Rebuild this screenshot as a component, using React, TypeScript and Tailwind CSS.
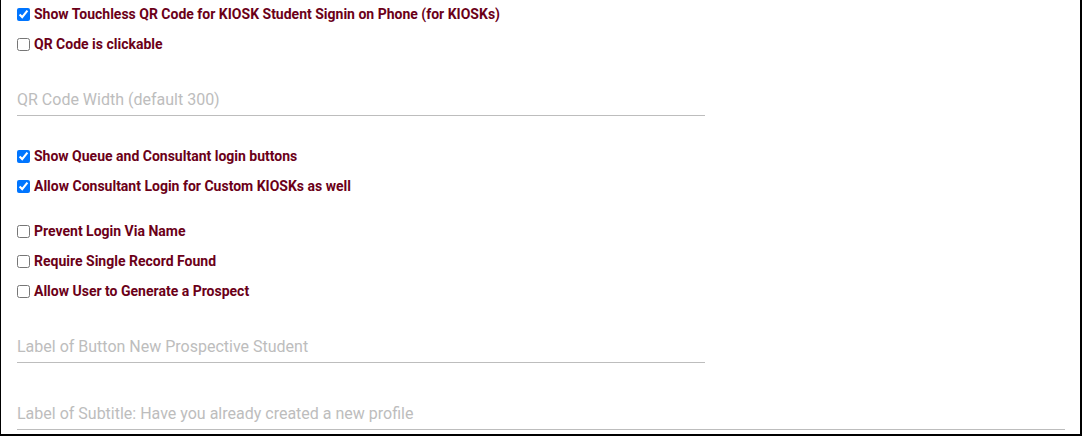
import React from "react";

const font = { fontFamily: "Roboto, 'Liberation Sans', sans-serif" };

function Check({ label, checked }: { label: string; checked?: boolean }) {
  return (
    <label className="flex h-[30px] items-center gap-[4px] text-[14px] font-bold text-[#6b0018]">
      <input type="checkbox" defaultChecked={checked} className="m-0 h-[13px] w-[13px]" />
      <span>{label}</span>
    </label>
  );
}

function Field({ placeholder, wide }: { placeholder: string; wide?: boolean }) {
  return (
    <input
      type="text"
      placeholder={placeholder}
      className={`h-[32px] ${wide ? "w-[1048px]" : "w-[688px]"} border-b border-[#bdbdbd] bg-transparent p-0 text-[16px] text-[#333] outline-none placeholder:text-[#bdbdbd]`}
      style={font}
    />
  );
}

export default function App() {
  return (
    <div
      className="box-border h-[436px] w-[1082px] overflow-hidden border-b-2 border-l border-r-2 border-black bg-white pl-[16px]"
      style={font}
    >
      <div className="flex flex-col">
        <div className="h-[29px]">
          <label className="flex h-[29px] items-center gap-[4px] text-[14px] font-bold text-[#6b0018]">
            <input type="checkbox" defaultChecked className="m-0 h-[13px] w-[13px]" />
            <span>Show Touchless QR Code for KIOSK Student Signin on Phone (for KIOSKs)</span>
          </label>
        </div>
        <Check label="QR Code is clickable" />
        <div className="mt-[25px]">
          <Field placeholder="QR Code Width (default 300)" />
        </div>
        <div className="mt-[25px]">
          <Check label="Show Queue and Consultant login buttons" checked />
          <Check label="Allow Consultant Login for Custom KIOSKs as well" checked />
        </div>
        <div className="mt-[15px]">
          <Check label="Prevent Login Via Name" />
          <Check label="Require Single Record Found" />
          <Check label="Allow User to Generate a Prospect" />
        </div>
        <div className="mt-[25px]">
          <Field placeholder="Label of Button New Prospective Student" />
        </div>
        <div className="mt-[35px]">
          <Field placeholder="Label of Subtitle: Have you already created a new profile" wide />
        </div>
      </div>
    </div>
  );
}
